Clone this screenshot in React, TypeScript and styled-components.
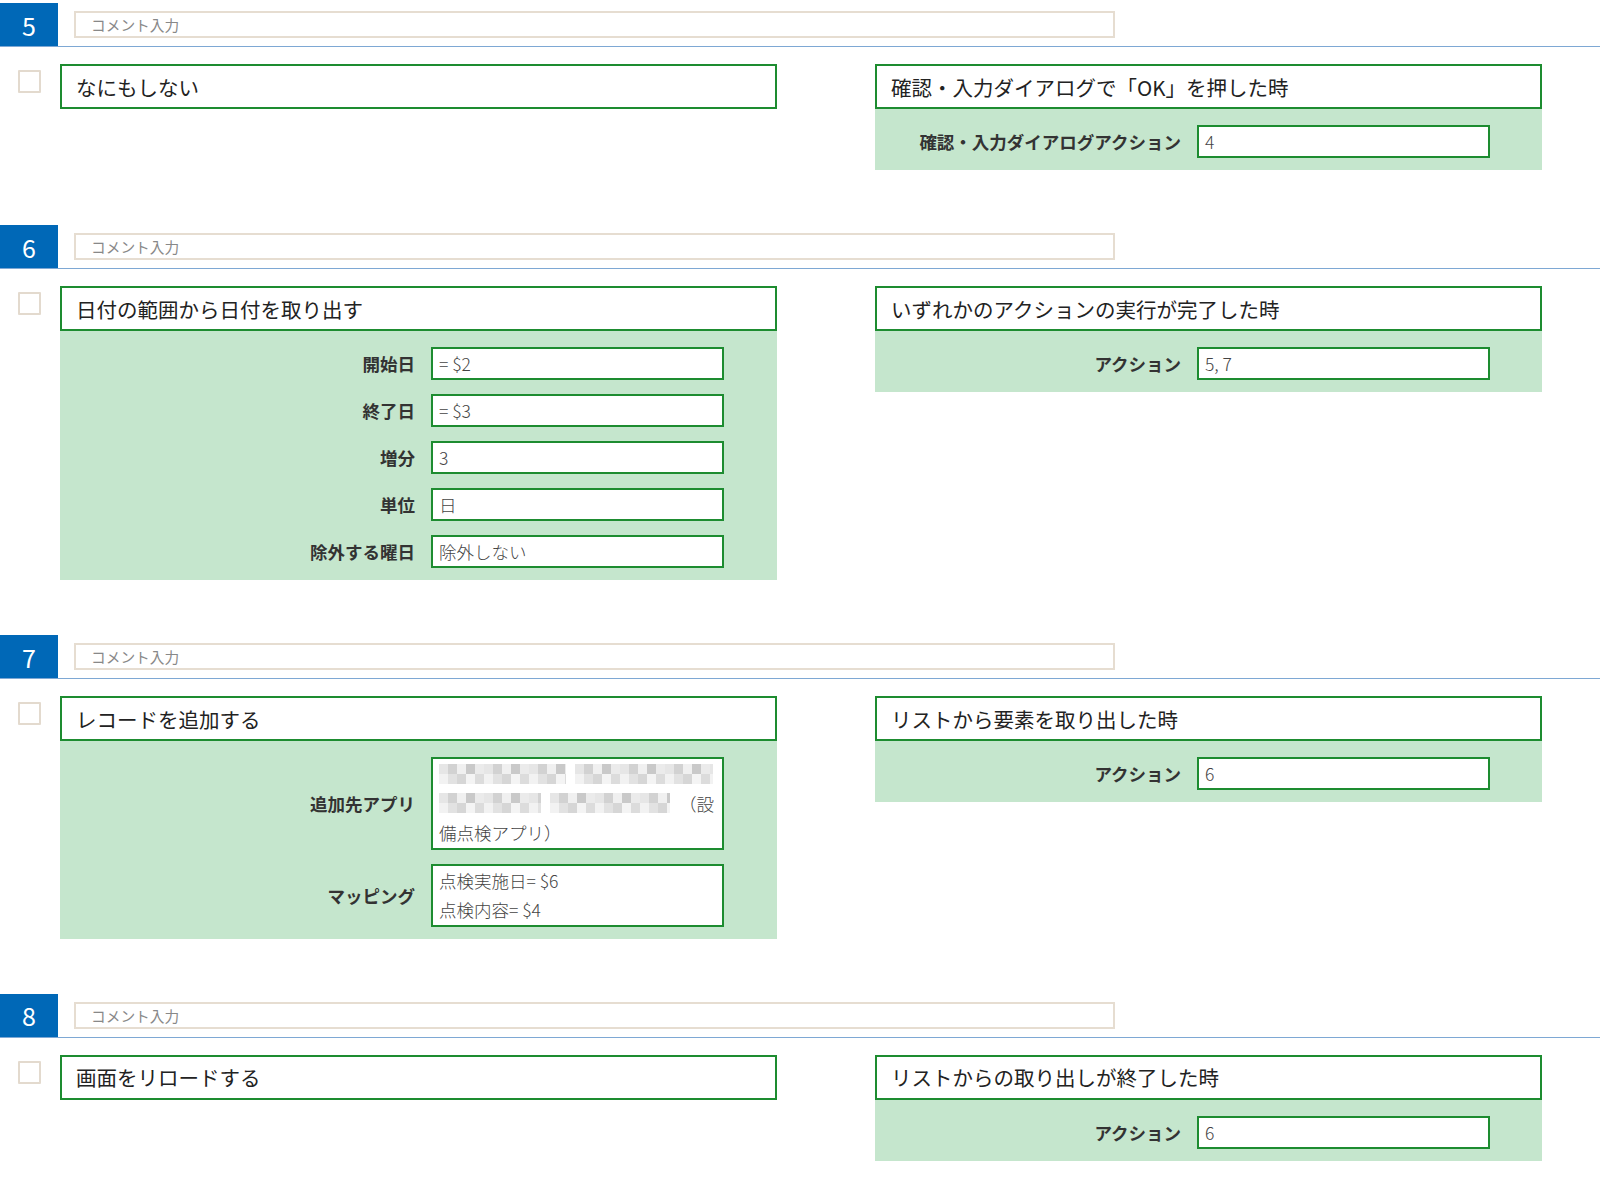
import React from 'react';
import styled, { createGlobalStyle } from 'styled-components';

const GlobalStyle = createGlobalStyle`
  html, body {
    margin: 0;
    padding: 0;
    background: #ffffff;
  }
  body {
    font-family: "Noto Sans CJK JP", "Noto Sans", sans-serif;
    color: #222;
  }
`;

type Field = {
  label: string;
  value: React.ReactNode;
  multiline?: boolean;
};

type Step = {
  no: number;
  action: string;
  actionFields?: Field[];
  trigger: string;
  triggerFields: Field[];
};

const Page = styled.div`
  padding-top: 3px;
  display: flex;
  flex-direction: column;
  gap: 55px;
`;

const Section = styled.section`
  display: flex;
  flex-direction: column;
  gap: 17px;
`;

const Header = styled.div`
  display: flex;
  align-items: center;
  height: 43px;
  border-bottom: 1px solid #7ea8d4;
`;

const NumberBox = styled.div`
  width: 58px;
  height: 43px;
  background: #0068b7;
  color: #fff;
  font-size: 25px;
  display: flex;
  align-items: center;
  justify-content: center;
`;

const Comment = styled.div`
  margin-left: 16px;
  width: 1041px;
  height: 27px;
  box-sizing: border-box;
  border: 2px solid #e6ddd1;
  padding-left: 15px;
  font-size: 14.7px;
  color: #888;
  display: flex;
  align-items: center;
`;

const Row = styled.div`
  display: flex;
  align-items: flex-start;
`;

const CheckCol = styled.div`
  width: 60px;
  flex: none;
  padding-top: 6px;
  padding-left: 18px;
  box-sizing: border-box;
`;

const Checkbox = styled.div`
  width: 23px;
  height: 23px;
  box-sizing: border-box;
  border: 2px solid #e3dace;
  border-radius: 1px;
  background: #fff;
`;

const Card = styled.div<{ $width: number }>`
  width: ${(p) => p.$width}px;
  flex: none;
  display: flex;
  flex-direction: column;
`;

const Title = styled.div`
  height: 45px;
  box-sizing: border-box;
  border: 2px solid #1d8c30;
  background: #fff;
  padding-left: 14px;
  font-size: 20.5px;
  display: flex;
  align-items: center;
  color: #222;
`;

const Panel = styled.div<{ $labelWidth: number }>`
  background: #c5e6cd;
  padding: 16px 0 12px;
  display: grid;
  grid-template-columns: ${(p) => p.$labelWidth}px 293px;
  column-gap: 16px;
  row-gap: 14px;
  align-items: center;
`;

const Label = styled.div`
  text-align: right;
  font-size: 17.5px;
  font-weight: 700;
  color: #333;
`;

const Input = styled.div<{ $multi?: boolean }>`
  min-height: 33px;
  box-sizing: border-box;
  border: 2px solid #1d8c30;
  background: #fff;
  padding: 0 6px;
  font-size: 17.5px;
  font-weight: 300;
  color: #444;
  line-height: ${(p) => (p.$multi ? '29.6px' : '29px')};
`;

const BlurLine = styled.span`
  display: flex;
  align-items: center;
  gap: 9px;
  white-space: nowrap;
  height: 29.6px;
`;

const Blur = styled.span<{ $w: number }>`
  display: inline-block;
  flex: none;
  width: ${(p) => p.$w}px;
  height: 20px;
  background-image:
    repeating-linear-gradient(90deg, #e6e6e6 0 9px, #d2d2d2 9px 18px, #f0f0f0 18px 27px, #c9c9c9 27px 36px, #ebebeb 36px 45px),
    repeating-linear-gradient(90deg, #f2f2f2 0 9px, #e2e2e2 9px 18px, #d6d6d6 18px 27px, #f4f4f4 27px 36px, #dcdcdc 36px 45px);
  background-size: 100% 50%, 100% 50%;
  background-position: top, bottom;
  background-repeat: no-repeat;
`;

const Spacer = styled.div`
  width: 98px;
  flex: none;
`;

const steps: Step[] = [
  {
    no: 5,
    action: 'なにもしない',
    trigger: '確認・入力ダイアログで「OK」を押した時',
    triggerFields: [{ label: '確認・入力ダイアログアクション', value: '4' }],
  },
  {
    no: 6,
    action: '日付の範囲から日付を取り出す',
    actionFields: [
      { label: '開始日', value: '= $2' },
      { label: '終了日', value: '= $3' },
      { label: '増分', value: '3' },
      { label: '単位', value: '日' },
      { label: '除外する曜日', value: '除外しない' },
    ],
    trigger: 'いずれかのアクションの実行が完了した時',
    triggerFields: [{ label: 'アクション', value: '5, 7' }],
  },
  {
    no: 7,
    action: 'レコードを追加する',
    actionFields: [
      {
        label: '追加先アプリ',
        multiline: true,
        value: (
          <>
            <BlurLine>
              <Blur $w={127} />
              <Blur $w={138} />
            </BlurLine>
            <BlurLine>
              <Blur $w={102} />
              <Blur $w={120} />
              （設
            </BlurLine>
            備点検アプリ）
          </>
        ),
      },
      {
        label: 'マッピング',
        multiline: true,
        value: (
          <>
            点検実施日= $6
            <br />
            点検内容= $4
          </>
        ),
      },
    ],
    trigger: 'リストから要素を取り出した時',
    triggerFields: [{ label: 'アクション', value: '6' }],
  },
  {
    no: 8,
    action: '画面をリロードする',
    trigger: 'リストからの取り出しが終了した時',
    triggerFields: [{ label: 'アクション', value: '6' }],
  },
];

const Fields = ({ fields, labelWidth }: { fields: Field[]; labelWidth: number }) => (
  <Panel $labelWidth={labelWidth}>
    {fields.map((f) => (
      <React.Fragment key={f.label}>
        <Label>{f.label}</Label>
        <Input $multi={f.multiline}>{f.value}</Input>
      </React.Fragment>
    ))}
  </Panel>
);

const StepSection = ({ step }: { step: Step }) => (
  <Section>
    <Header>
      <NumberBox>{step.no}</NumberBox>
      <Comment>コメント入力</Comment>
    </Header>
    <Row>
      <CheckCol>
        <Checkbox />
      </CheckCol>
      <Card $width={717}>
        <Title>{step.action}</Title>
        {step.actionFields && <Fields fields={step.actionFields} labelWidth={355} />}
      </Card>
      <Spacer />
      <Card $width={667}>
        <Title>{step.trigger}</Title>
        <Fields fields={step.triggerFields} labelWidth={306} />
      </Card>
    </Row>
  </Section>
);

const App = () => (
  <>
    <GlobalStyle />
    <Page>
      {steps.map((s) => (
        <StepSection key={s.no} step={s} />
      ))}
    </Page>
  </>
);

export default App;
